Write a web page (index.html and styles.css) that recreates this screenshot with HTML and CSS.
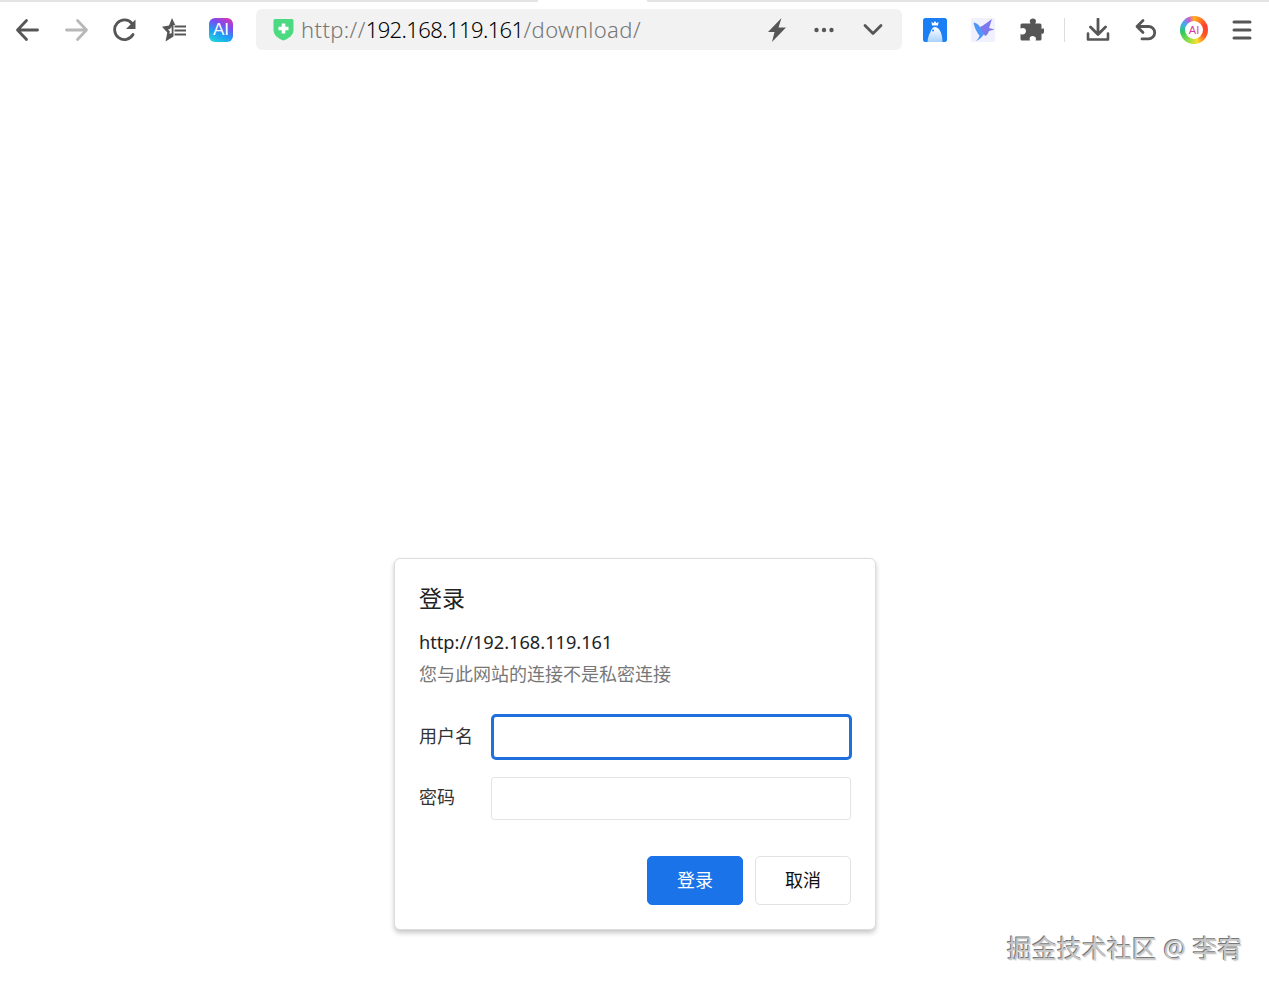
FILE: index.html
```html
<!DOCTYPE html>
<html lang="zh-CN">
<head>
<meta charset="utf-8">
<title>登录</title>
<link rel="stylesheet" href="styles.css">
</head>
<body>
<div class="tabstrip"><div class="tab-rest tab-left"></div><div class="tab-active"></div><div class="tab-rest tab-right"></div></div>
<header class="toolbar">
  <svg class="ico ml15" viewBox="0 0 24 24"><path class="st dark" d="M22.500 12H3.500M11.500 2.500 2.500 12l9 9.500"/></svg>
  <svg class="ico ml26" viewBox="0 0 24 24"><path class="st light" d="M1.500 12h19M12.500 2.500l9 9.500-9 9.500"/></svg>
  <svg class="ico ml24" viewBox="0 0 24 24"><path class="st dark" d="M20 16.500A9.800 9.800 0 1 1 19 5.500"/><path class="fl" d="M22.500 1.500v9.500h-9.500z"/></svg>
  <svg class="ico ml25" viewBox="0 0 24 24"><path class="fl" fill-rule="evenodd" d="M10 0 13.300 7H11.500V18.500L3.500 23.500 5.300 14.600 0 8.800 7 7.500zM9.500 8.500 8 11l-2 .5 1.800 1.700-.3 2.800 2.300-1z"/><path class="st dark thin" d="M12.500 8.500h11.500M12.500 12.500h11.500M12.500 16.500h11.500"/></svg>
  <div class="ai-badge ml23"><span>AI</span></div>
  <div class="address">
    <svg class="shield" viewBox="0 0 21 23"><path d="M2 1h17a1.500 1.500 0 0 1 1.500 1.500v9.500c0 5-4.500 8.500-10 10.500C5 20.500.500 17 .500 12V2.500A1.500 1.500 0 0 1 2 1z" fill="#4bd981"/><path d="M10.500 5.500v10M5.500 10.500h10" stroke="#fff" stroke-width="3.600" fill="none"/></svg>
    <div class="url"><span class="dim">http://</span><span class="host">192.168.119.161</span><span class="dim">/download/</span></div>
    <div class="addr-tools">
      <svg class="ico" viewBox="0 0 24 24"><path class="fl" d="M16.500 0 3 14h6.500l-2.500 10L21 9.500h-7.500z"/></svg>
      <svg class="ico ml23" viewBox="0 0 24 24"><circle class="fl" cx="4.500" cy="12" r="2.200"/><circle class="fl" cx="12" cy="12" r="2.200"/><circle class="fl" cx="19.500" cy="12" r="2.200"/></svg>
      <svg class="ico ml25" viewBox="0 0 24 24"><path class="st dark" d="M4 7.500l8 8 8-8"/></svg>
    </div>
  </div>
  <svg class="ico ml21" viewBox="0 0 24 24"><defs><linearGradient id="bird" x1="0" y1="0" x2="0" y2="1"><stop offset="0" stop-color="#fff"/><stop offset="1" stop-color="#a9d2fb"/></linearGradient></defs><rect width="24" height="24" rx="2.500" fill="#1a7ff5"/><path d="M9 7.500 8.500 3.800l2 1.400L12 3l1.500 2.200 2-1.400L15 7.500z" fill="#fff"/><path fill="url(#bird)" d="M4.500 24c0-2 1-7 3-10 .7-3 2.500-5 4.500-5 3.500 0 7.500 5 7.500 15z"/><circle cx="10" cy="12.500" r="1" fill="#1a7ff5"/></svg>
  <svg class="ico ml24" viewBox="0 0 24 24"><rect width="24" height="24" rx="2" fill="#f0f1fc"/><path d="M2.500 4.500c3 .5 5 2 6.500 4.500l5 5c-1 3.500-4.500 7-9 9 2-2 3-3.500 3.500-5.500C6 15 3.500 9.500 2.500 4.500z" fill="#4f97f7"/><path d="M9 9c2.500-1 6-3.500 12-8-1.500 4-2 7-3 9l5.500 1.500L18 13c-1 3-2.500 4.500-4 5z" fill="#7d78f0"/></svg>
  <svg class="ico ml25" viewBox="0 0 24 24"><path class="fl" d="M7 5.500h3.500c-1.800-3 0-5 2.500-5s4 2.300 2.200 5H20a1.500 1.500 0 0 1 1.500 1.500v4c3-1.500 3.500.7 2.500 3.300-.6 1.700-2 2-2.500.9V21a1.500 1.500 0 0 1-1.500 1.500h-4.500c1.500-3-.7-4.500-3-4.500s-3.500 1.800-2.500 4.500H2A1.500 1.500 0 0 1 .500 21v-5c3 1.500 5.500-.5 5.500-3s-2.700-4-5.500-2.500V7A1.500 1.500 0 0 1 2 5.500z"/></svg>
  <div class="divider"></div>
  <svg class="ico ml21" viewBox="0 0 24 24"><path class="st dark" d="M12 1v15M4.500 9l7.500 7.500L19.500 9"/><path class="st dark wide" d="M2 15.500V21.500h20v-6"/></svg>
  <svg class="ico ml24" viewBox="0 0 24 24"><path class="st dark" d="M9 2.500 3 8.500l6 6M3.500 8.500h11a6.200 6.200 0 0 1 0 12.400H8"/></svg>
  <div class="ai-ring ml22"><div class="ai-ring-inner">AI</div></div>
  <svg class="ico ml22" viewBox="0 0 24 24"><path class="st dark menu" d="M4 4h16M4 12h16M4 20h16"/></svg>
</header>
<main class="page">
  <form class="dialog">
    <h1 class="title">登录</h1>
    <div class="origin">http://192.168.119.161</div>
    <div class="note">您与此网站的连接不是私密连接</div>
    <div class="row row-user"><label class="label">用户名</label><div class="input input-focus"></div></div>
    <div class="row row-pass"><label class="label">密码</label><div class="input"></div></div>
    <div class="actions"><button type="button" class="btn primary">登录</button><button type="button" class="btn">取消</button></div>
  </form>
</main>
<div class="watermark">掘金技术社区 @ 李宥</div>
</body>
</html>
```
FILE: styles.css
```css
* { box-sizing: border-box; }
html, body { margin: 0; height: 100%; }
body {
  position: relative;
  background: #fff;
  overflow: hidden;
  font-family: "Noto Sans", "Noto Sans CJK SC", sans-serif;
  color: #222;
}
.tabstrip { display: flex; height: 2px; }
.tab-rest { background: #e4e4e4; }
.tab-left { width: 538px; }
.tab-active { width: 109px; }
.tab-right { flex: 1; }
.toolbar { display: flex; align-items: center; height: 55px; }
.ico { width: 24px; height: 24px; flex: none; display: block; }
.st { fill: none; stroke-width: 2.800; stroke-linecap: round; stroke-linejoin: round; }
.dark { stroke: #565656; }
.light { stroke: #b8b8b8; }
.thin { stroke-width: 2.200; stroke-linecap: butt; }
.wide { stroke-width: 2.600; }
.menu { stroke-width: 3; }
.fl { fill: #565656; }
.ml15 { margin-left: 15px; }
.ml21 { margin-left: 21px; }
.ml22 { margin-left: 22px; }
.ml23 { margin-left: 23px; }
.ml24 { margin-left: 24px; }
.ml25 { margin-left: 25px; }
.ml26 { margin-left: 26px; }
.ai-badge {
  width: 24px; height: 24px; flex: none;
  display: flex; align-items: center; justify-content: center;
  border-radius: 6px;
  background: linear-gradient(205deg, #ee2fa6 0%, #7a4cf0 32%, #1f9cf5 62%, #1ee0d8 100%);
  color: #fff; font: 400 17px "Liberation Sans", sans-serif;
}
.address {
  width: 646px; height: 41px; margin-left: 23px; flex: none;
  display: flex; align-items: center;
  padding: 0 17px;
  background: #f2f2f2; border-radius: 6px;
}
.shield { width: 21px; height: 23px; flex: none; }
.url { margin-left: 7px; padding-bottom: 2px; font-size: 22px; color: #000; white-space: nowrap; font-weight: 300; }
.dim { color: #777; letter-spacing: .4px; }
.host { letter-spacing: -.6px; }
.addr-tools { margin-left: auto; display: flex; align-items: center; }
.divider { width: 1px; height: 24px; margin-left: 20px; background: #ddd; flex: none; }
.ai-ring {
  width: 28px; height: 28px; flex: none; border-radius: 50%;
  display: flex; align-items: center; justify-content: center;
  background: conic-gradient(#ffb020 0deg, #ff3b30 70deg, #ff5a20 120deg, #f7e030 165deg, #7fdc4a 215deg, #2ec85a 260deg, #3bb0f0 300deg, #c85ad8 335deg, #ffb020 360deg);
}
.ai-ring-inner {
  width: 18px; height: 18px; border-radius: 50%;
  background: #fff; color: #d93a9a;
  font: 400 11px/18px "Liberation Sans", sans-serif; text-align: center;
}
.page { display: flex; padding: 501px 0 0 394px; }
.dialog {
  width: 482px; height: 372px;
  padding: 21px 22px 24px 24px;
  background: #fff;
  border: 1px solid #dcdcdc;
  border-radius: 6px;
  box-shadow: 0 3px 5px rgba(0, 0, 0, .22);
}
.title { margin: 0; font-size: 23px; line-height: 36px; font-weight: 400; color: #222; }
.origin { margin-top: 10px; font-size: 18.200px; line-height: 32px; color: #222; }
.note { font-size: 18px; line-height: 32px; color: #777; }
.row { display: flex; align-items: center; }
.row-user { margin-top: 24px; }
.row-pass { margin-top: 17px; }
.label { width: 72px; flex: none; padding-bottom: 5px; font-size: 18px; color: #333; }
.input { width: 360px; height: 43px; border: 1px solid #e4e4e4; border-radius: 3px; background: #fff; }
.input-focus { width: 361px; height: 46px; border: 3px solid #1f6fdc; border-radius: 5px; }
.actions { display: flex; justify-content: flex-end; gap: 12px; margin-top: 36px; padding-right: 2px; }
.btn {
  width: 96px; height: 49px; padding: 0 0 3px;
  font: 400 18px "Noto Sans CJK SC", sans-serif;
  color: #111; background: #fff;
  border: 1px solid #e2e2e2; border-radius: 5px;
}
.primary { background: #1a73e8; border-color: #1a73e8; color: #fff; }
.watermark {
  position: absolute; left: 1007px; top: 930px;
  font-size: 25px; line-height: 36px; color: #c6c6c6; white-space: nowrap;
  text-shadow: -1px -1px 0 #777, 1px 1px 0 #f2f2f2;
}
```
